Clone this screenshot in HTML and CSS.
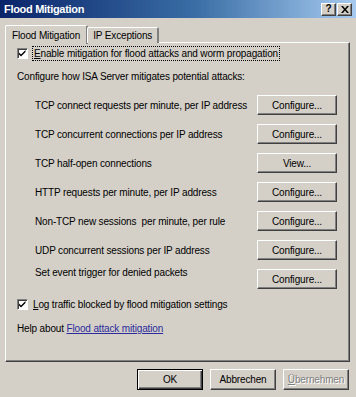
FILE: index.html
```html
<!DOCTYPE html>
<html>
<head>
<meta charset="utf-8">
<link rel="stylesheet" href="styles.css">
</head>
<body>
<div class="window">
  <div class="titlebar">
    <span class="title">Flood Mitigation</span>
    <div class="caption-btns">
      <span class="cbtn help">?</span>
      <span class="cbtn close">
        <svg width="8" height="7" viewBox="0 0 8 7"><path d="M0 0h2l2 2.5 2-2.5h2l-3 3.5 3 3.5h-2l-2-2.5-2 2.5h-2l3-3.5z" fill="#000"/></svg>
      </span>
    </div>
  </div>
  <div class="tabs">
    <div class="tab active">Flood Mitigation</div>
    <div class="tab">IP Exceptions</div>
  </div>
  <div class="panel">
    <div class="check-row first">
      <span class="checkbox"><svg width="9" height="9" viewBox="0 0 9 9"><path d="M1 3.5l2 2 4.5-4.5v2l-4.5 4.5-2-2z" fill="#000"/></svg></span>
      <span class="focus"><u>E</u>nable mitigation for flood attacks and worm propagation</span>
    </div>
    <div class="intro">Configure how ISA Server mitigates potential attacks:</div>
    <div class="rows">
      <div class="row"><span class="label">TCP connect requests per minute, per IP address</span><button class="btn">Configure...</button></div>
      <div class="row"><span class="label">TCP concurrent connections per IP address</span><button class="btn">Configure...</button></div>
      <div class="row"><span class="label">TCP half-open connections</span><button class="btn">View...</button></div>
      <div class="row"><span class="label">HTTP requests per minute, per IP address</span><button class="btn">Configure...</button></div>
      <div class="row"><span class="label">Non-TCP new sessions&nbsp; per minute, per rule</span><button class="btn">Configure...</button></div>
      <div class="row"><span class="label">UDP concurrent sessions per IP address</span><button class="btn">Configure...</button></div>
      <div class="row last"><span class="label">Set event trigger for denied packets</span><button class="btn">Configure...</button></div>
    </div>
    <div class="check-row log">
      <span class="checkbox"><svg width="9" height="9" viewBox="0 0 9 9"><path d="M1 3.5l2 2 4.5-4.5v2l-4.5 4.5-2-2z" fill="#000"/></svg></span>
      <span><u>L</u>og traffic blocked by flood mitigation settings</span>
    </div>
    <div class="help-row">Help about <a class="link">Flood attack mitigation</a></div>
  </div>
  <div class="footer">
    <button class="btn dlg default">OK</button>
    <button class="btn dlg">Abbrechen</button>
    <button class="btn dlg disabled"><u>Ü</u>bernehmen</button>
  </div>
</div>
</body>
</html>
```
FILE: styles.css
```css
* { box-sizing: border-box; }
html, body { margin: 0; padding: 0; }
body {
  width: 356px;
  height: 397px;
  background: #d4d0c8;
  font-family: "Liberation Sans", Arial, sans-serif;
  font-size: 10px;
  letter-spacing: -0.15px;
  line-height: 13px;
  color: #000;
  overflow: hidden;
}
.window { width: 356px; height: 397px; }
.titlebar {
  height: 18px;
  background: linear-gradient(to right, #0a246a 0%, #3a6ea5 55%, #a6caf0 100%);
  display: flex;
  align-items: center;
  justify-content: space-between;
  padding: 0 4px 0 4px;
}
.title { color: #fff; font-weight: bold; font-size: 11px; letter-spacing: -0.3px; }
.caption-btns { display: flex; gap: 1px; }
.cbtn {
  width: 15px;
  height: 13px;
  background: #d4d0c8;
  border-top: 1px solid #fff;
  border-left: 1px solid #fff;
  border-right: 1px solid #404040;
  border-bottom: 1px solid #404040;
  box-shadow: inset -1px -1px 0 #808080;
  display: flex;
  align-items: center;
  justify-content: center;
  font-weight: bold;
  font-size: 10px;
  line-height: 1;
}
.tabs {
  display: flex;
  align-items: flex-end;
  height: 24px;
  margin: 0 0 0 5px;
  padding-left: 2px;
  position: relative;
  z-index: 1;
}
.tab {
  height: 16px;
  padding: 1px 5px 0 5px;
  border-top: 1px solid #fff;
  border-left: 1px solid #fff;
  border-right: 2px solid #808080;
  border-radius: 2px 2px 0 0;
  margin-bottom: -1px;
  background: #d4d0c8;
}
.tab.active {
  height: 19px;
  margin-left: -2px;
  margin-right: -1px;
  padding: 3px 6px 0 6px;
  margin-bottom: -2px;
}
.panel {
  margin: 0 6px 0 5px;
  height: 320px;
  border-top: 1px solid #fff;
  border-left: 1px solid #fff;
  border-right: 1px solid #404040;
  border-bottom: 1px solid #404040;
  box-shadow: inset -1px -1px 0 #808080;
  padding: 4px 0 0 11px;
}
.check-row { display: flex; align-items: center; gap: 5px; height: 13px; }
.checkbox {
  width: 11px;
  height: 11px;
  background: #fff;
  border-top: 1px solid #808080;
  border-left: 1px solid #808080;
  border-right: 1px solid #fff;
  border-bottom: 1px solid #fff;
  box-shadow: inset 1px 1px 0 #404040;
  display: flex;
  align-items: center;
  justify-content: center;
}
.focus { outline: 1px dotted #000; padding: 0 1px; }
.intro { margin-top: 10px; height: 13px; }
.rows { margin-top: 12px; padding-left: 18px; padding-right: 12px; }
.row {
  display: flex;
  align-items: center;
  justify-content: space-between;
  height: 20px;
  margin-bottom: 9px;
}
.row.last { margin-top: 3px; align-items: flex-start; }
.row.last .label { margin-top: -3px; }
.btn {
  font-family: inherit;
  font-size: 10px;
  letter-spacing: -0.15px;
  color: #000;
  background: #d4d0c8;
  width: 80px;
  height: 20px;
  padding: 0;
  border-top: 1px solid #fff;
  border-left: 1px solid #fff;
  border-right: 1px solid #404040;
  border-bottom: 1px solid #404040;
  box-shadow: inset -1px -1px 0 #808080;
  border-radius: 0;
}
.check-row.log { margin-top: 7px; }
.help-row { margin-top: 11px; }
.link { color: #2b2b9c; text-decoration: underline; }
.footer {
  display: flex;
  justify-content: flex-end;
  gap: 7px;
  padding: 7px 7px 0 0;
}
.btn.dlg { width: 66px; height: 21px; }
.btn.default {
  border: 1px solid #000;
  box-shadow: inset 1px 1px 0 #fff, inset -1px -1px 0 #404040, inset -2px -2px 0 #808080;
}
.btn.disabled { color: #808080; text-shadow: 1px 1px 0 #fff; }
```
